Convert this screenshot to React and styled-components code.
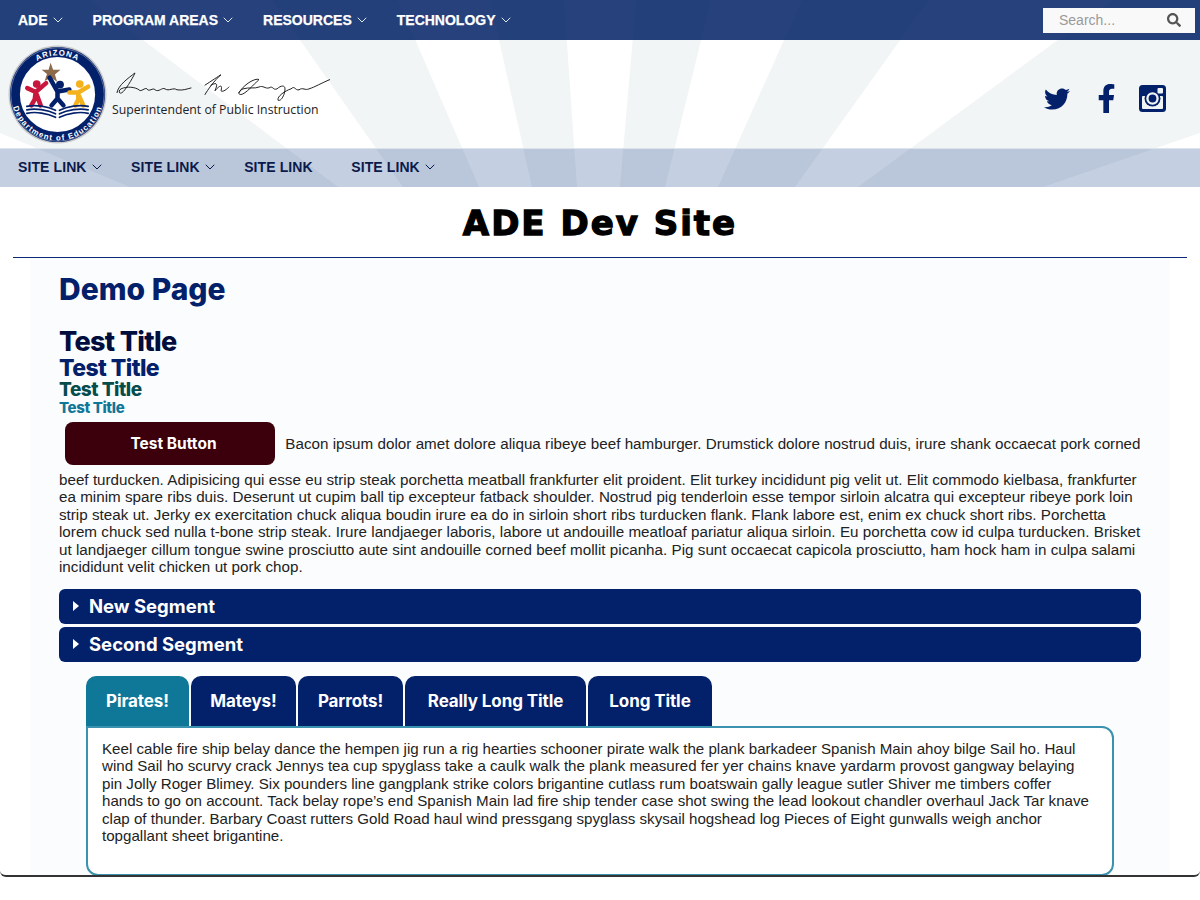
import styled, { createGlobalStyle } from "styled-components";
import { FaTwitter, FaFacebookF, FaSearch } from "react-icons/fa";
import { FiChevronDown } from "react-icons/fi";

const navy = "#03206a";
const teal = "#0f7899";
const heading = "Inter, 'Open Sans', sans-serif";

const GlobalStyle = createGlobalStyle`
  html, body {
    margin: 0;
    padding: 0;
    background: #fff;
    font-family: "Liberation Sans", Arial, sans-serif;
  }
  * { box-sizing: border-box; }
`;

const topLinks = [
  { label: "ADE" },
  { label: "PROGRAM AREAS" },
  { label: "RESOURCES" },
  { label: "TECHNOLOGY" },
];

const siteLinks = [
  { label: "SITE LINK", caret: true },
  { label: "SITE LINK", caret: true },
  { label: "SITE LINK", caret: false },
  { label: "SITE LINK", caret: true },
];

const rays = [
  "0,0 90,0 338,187 130,187 0,133",
  "272,0 398,0 479,187 403,187",
  "490,0 564,0 577,187 532,187",
  "636,0 711,0 665,187 620,187",
  "802,0 929,0 795,187 718,187",
  "1112,0 1200,0 1200,133 1043,187 858,187",
];

const tabs = [
  { label: "Pirates!", width: 103 },
  { label: "Mateys!", width: 105 },
  { label: "Parrots!", width: 105 },
  { label: "Really Long Title", width: 181 },
  { label: "Long Title", width: 124 },
];

const Rays = () => (
  <RaySvg viewBox="0 0 1200 187" preserveAspectRatio="none">
    {rays.map((points) => (
      <polygon key={points} points={points} fill="#f2f5f6" />
    ))}
  </RaySvg>
);

const Logo = () => (
  <LogoSvg viewBox="0 0 100 100">
    <defs>
      <path id="arcTop" d="M 10.5 50 A 39.5 39.5 0 0 1 89.5 50" />
      <path id="arcBottom" d="M 3.5 50 A 46.5 46.5 0 0 0 96.5 50" />
    </defs>
    <circle cx="50" cy="50" r="49.5" fill="#c9c9c9" />
    <circle cx="50" cy="50" r="48" fill={navy} />
    <circle cx="50" cy="50" r="47.2" fill="none" stroke="#dfe3ee" strokeWidth="0.4" />
    <circle cx="50" cy="50" r="38" fill="#fff" />
    <text fill="#fff" fontSize="8" fontWeight="700" letterSpacing="1" fontFamily="Liberation Sans, sans-serif">
      <textPath href="#arcTop" startOffset="50%" textAnchor="middle">
        ARIZONA
      </textPath>
    </text>
    <text fill="#fff" fontSize="8" fontWeight="700" letterSpacing="1.1" fontFamily="Liberation Sans, sans-serif">
      <textPath href="#arcBottom" startOffset="50%" textAnchor="middle">
        Department of Education
      </textPath>
    </text>
    <polygon
      points="43,18 45.6,25 53,25 47.4,29.8 49.6,37 43.4,33 37,36.4 39.4,29.4 34,25 41,25"
      fill="#8c6b4c"
    />
    <g fill="none" strokeLinecap="round" strokeLinejoin="round">
      <circle cx="29" cy="39.5" r="3.9" fill="#c8163c" />
      <path d="M19.5 43.5 L28 47.5 L38.5 38.5 M28 47 L27 55 L23.5 61 M29 50 L33 61" stroke="#c8163c" strokeWidth="4.6" />
      <circle cx="52.5" cy="40" r="4" fill={navy} />
      <path d="M42 33 L50 47 L62 45 M50 46 L50 54 L44 61 M50 54 L56 61" stroke={navy} strokeWidth="4.6" />
      <circle cx="72.5" cy="39.5" r="3.9" fill="#f4b31c" />
      <path d="M62 48 L71 48 L81 42 M71 48 L71 55 L68 61 M72 52 L76 61" stroke="#f4b31c" strokeWidth="4.6" />
      <path d="M19 62 C28 60 40 62 48 66 M52 66 C60 62 72 60 81 62" stroke={navy} strokeWidth="1.7" />
      <path d="M19 65.5 C28 63.5 40 65.5 48 69.5 M52 69.5 C60 65.5 72 63.5 81 65.5" stroke={navy} strokeWidth="1.7" />
      <path d="M19 69 C28 67 40 69 48 73 M52 73 C60 69 72 67 81 69" stroke={navy} strokeWidth="1.7" />
    </g>
  </LogoSvg>
);

const Signature = () => (
  <SignatureSvg viewBox="0 0 215 32" preserveAspectRatio="none">
    <g fill="none" stroke="#1c1c1c" strokeWidth="1" strokeLinecap="round">
      <path d="M2 22 C3 14 14 6 20 1 C17 8 10 20 7 22 C4 24 3 20 6 18 C12 15 20 16 24 19 C26 22 30 16 32 18 C34 22 38 16 40 19 C44 22 47 16 50 18 C54 21 58 16 62 19 C68 20 72 18 76 17" />
      <path d="M90 14 C96 10 104 4 106 3 C100 8 92 20 90 24 M96 14 C100 12 104 10 100 20 C104 15 108 12 106 20 C108 22 112 18 114 16" />
      <path d="M124 22 C128 14 140 6 144 8 C140 12 130 24 126 24 C122 24 124 20 128 18 C134 16 140 18 144 16 C148 14 150 18 154 17 C158 14 158 20 162 18 C166 14 170 14 170 18 C170 24 166 32 163 30 C162 26 170 20 176 18 C180 14 180 20 184 19 C188 16 190 20 194 18 C200 16 206 12 215 8" />
    </g>
  </SignatureSvg>
);

const InstagramIcon = () => (
  <svg width="27" height="27" viewBox="0 0 27 27">
    <rect width="27" height="27" rx="3.5" fill={navy} />
    <rect x="3" y="11" width="21" height="13" rx="1" fill="#f1f4f5" />
    <circle cx="13.5" cy="13.5" r="8" fill={navy} />
    <circle cx="13.5" cy="13.5" r="6.2" fill="#f1f4f5" />
    <circle cx="13.5" cy="13.5" r="3.9" fill={navy} />
    <rect x="18.5" y="3" width="5.5" height="5.5" rx="1" fill="#f1f4f5" />
  </svg>
);

const App = () => {
  return (
    <Shell>
      <GlobalStyle />
      <Header>
        <Rays />
        <TopBar>
          <NavRow>
            {topLinks.map((link) => (
              <TopLink key={link.label}>
                {link.label}
                <FiChevronDown />
              </TopLink>
            ))}
          </NavRow>
          <SearchBox>
            <SearchHint>Search...</SearchHint>
            <FaSearch />
          </SearchBox>
        </TopBar>
        <Masthead>
          <Brand>
            <Logo />
            <BrandText>
              <Signature />
              <Superintendent>Superintendent of Public Instruction</Superintendent>
            </BrandText>
          </Brand>
          <Social>
            <FaTwitter size={26} />
            <FaFacebookF size={29} />
            <InstagramIcon />
          </Social>
        </Masthead>
        <SiteBar>
          {siteLinks.map((link, idx) => (
            <SiteLink key={idx} $plain={!link.caret}>
              {link.label}
              {link.caret && <FiChevronDown />}
            </SiteLink>
          ))}
        </SiteBar>
      </Header>

      <SiteTitle>ADE Dev Site</SiteTitle>

      <Main>
        <PageTitle>Demo Page</PageTitle>
        <TitleStack>
          <TestTitle $size={27} $color="#000d3d">Test Title</TestTitle>
          <TestTitle $size={23} $color={navy}>Test Title</TestTitle>
          <TestTitle $size={19} $color="#064c4c">Test Title</TestTitle>
          <TestTitle $size={15} $color={teal}>Test Title</TestTitle>
        </TitleStack>
        <Copy>
          <TestButton>Test Button</TestButton> Bacon ipsum dolor amet dolore aliqua ribeye beef hamburger. Drumstick
          dolore nostrud duis, irure shank occaecat pork corned beef turducken. Adipisicing qui esse eu strip steak
          porchetta meatball frankfurter elit proident. Elit turkey incididunt pig velit ut. Elit commodo kielbasa,
          frankfurter ea minim spare ribs duis. Deserunt ut cupim ball tip excepteur fatback shoulder. Nostrud pig
          tenderloin esse tempor sirloin alcatra qui excepteur ribeye pork loin strip steak ut. Jerky ex exercitation
          chuck aliqua boudin irure ea do in sirloin short ribs turducken flank. Flank labore est, enim ex chuck short
          ribs. Porchetta lorem chuck sed nulla t-bone strip steak. Irure landjaeger laboris, labore ut andouille
          meatloaf pariatur aliqua sirloin. Eu porchetta cow id culpa turducken. Brisket ut landjaeger cillum tongue
          swine prosciutto aute sint andouille corned beef mollit picanha. Pig sunt occaecat capicola prosciutto, ham
          hock ham in culpa salami incididunt velit chicken ut pork chop.
        </Copy>
        <Segments>
          <Segment>
            <Arrow />
            New Segment
          </Segment>
          <Segment>
            <Arrow />
            Second Segment
          </Segment>
        </Segments>
        <TabArea>
          <TabRow>
            {tabs.map((tab, idx) => (
              <Tab key={tab.label} $active={idx === 0} $width={tab.width}>
                {tab.label}
              </Tab>
            ))}
          </TabRow>
          <TabPanel>
            Keel cable fire ship belay dance the hempen jig run a rig hearties schooner pirate walk the plank barkadeer
            Spanish Main ahoy bilge Sail ho. Haul wind Sail ho scurvy crack Jennys tea cup spyglass take a caulk walk
            the plank measured fer yer chains knave yardarm provost gangway belaying pin Jolly Roger Blimey. Six
            pounders line gangplank strike colors brigantine cutlass rum boatswain gally league sutler Shiver me timbers
            coffer hands to go on account. Tack belay rope’s end Spanish Main lad fire ship tender case shot swing the
            lead lookout chandler overhaul Jack Tar knave clap of thunder. Barbary Coast rutters Gold Road haul wind
            pressgang spyglass skysail hogshead log Pieces of Eight gunwalls weigh anchor topgallant sheet brigantine.
          </TabPanel>
        </TabArea>
      </Main>
    </Shell>
  );
};

export default App;

const Shell = styled.div`
  height: 877px;
  overflow: hidden;
  background: #fff;
  border-bottom: 2px solid #333;
  border-radius: 0 0 6px 6px;
`;

const Header = styled.header`
  position: relative;
  height: 187px;
  background: #fff;
`;

const RaySvg = styled.svg`
  position: absolute;
  inset: 0;
  width: 100%;
  height: 100%;
`;

const TopBar = styled.div`
  position: relative;
  display: flex;
  align-items: center;
  justify-content: space-between;
  height: 40px;
  padding: 0 5px 0 18px;
  background: rgba(0, 32, 100, 0.85);
`;

const NavRow = styled.nav`
  display: flex;
  gap: 30px;
`;

const TopLink = styled.a`
  display: flex;
  align-items: center;
  gap: 5px;
  color: #fff;
  font-size: 14px;
  font-weight: 700;
  -webkit-text-stroke: 0.25px #fff;

  svg {
    width: 16px;
    height: 16px;
    margin: 0 -3px;
    stroke-width: 1.3;
    -webkit-text-stroke: 0;
  }
`;

const SearchBox = styled.div`
  display: flex;
  align-items: center;
  justify-content: space-between;
  width: 152px;
  height: 25px;
  padding: 0 14px 0 16px;
  background: #f9f9f9;
  color: #555;

  svg {
    width: 14px;
    height: 14px;
  }
`;

const SearchHint = styled.span`
  color: #999;
  font-size: 14px;
`;

const Masthead = styled.div`
  position: relative;
  display: flex;
  align-items: center;
  justify-content: space-between;
  height: 109px;
  padding: 0 34px 0 8px;
  border-bottom: 1px solid #dde3ea;
`;

const Brand = styled.div`
  display: flex;
  align-items: center;
  gap: 5px;
`;

const LogoSvg = styled.svg`
  width: 99px;
  height: 99px;
`;

const BrandText = styled.div`
  display: flex;
  flex-direction: column;
  margin-top: 1px;
`;

const SignatureSvg = styled.svg`
  width: 215px;
  height: 30px;
  margin-left: 3px;
`;

const Superintendent = styled.div`
  color: #222;
  font-family: "Open Sans", sans-serif;
  font-size: 12.25px;
  font-weight: 500;
  line-height: 15px;
  white-space: nowrap;
`;

const Social = styled.div`
  display: flex;
  align-items: center;
  gap: 18px;
  margin-top: 9px;
  color: ${navy};

  svg:first-child {
    margin-right: 4px;
  }
`;

const SiteBar = styled.nav`
  position: relative;
  display: flex;
  align-items: center;
  gap: 29.5px;
  height: 38px;
  padding: 0 0 2px 18px;
  background: rgba(0, 48, 126, 0.23);
`;

const SiteLink = styled.a`
  display: flex;
  align-items: center;
  gap: 5px;
  margin-right: ${(p) => (p.$plain ? "9px" : "0")};
  color: #0b1a4a;
  font-size: 14px;
  font-weight: 700;
  letter-spacing: 0.1px;

  svg {
    width: 16px;
    height: 16px;
    margin: 0 -3px;
    stroke-width: 1.5;
  }
`;

const SiteTitle = styled.h1`
  margin: 0 13px;
  height: 71px;
  padding-top: 14px;
  border-bottom: 1px solid #0a2a78;
  color: #000;
  font-family: "DejaVu Sans", sans-serif;
  font-size: 34px;
  font-weight: 700;
  letter-spacing: 2px;
  line-height: 44px;
  text-align: center;
  -webkit-text-stroke: 1.3px #000;
`;

const Main = styled.main`
  margin: 0 30px;
  min-height: 640px;
  padding: 13px 29px 0;
  background: #fbfcfe;
`;

const PageTitle = styled.h2`
  margin: 0 0 21px;
  color: ${navy};
  font-family: ${heading};
  font-size: 30px;
  font-weight: 800;
  line-height: 36px;
`;

const TitleStack = styled.div`
  display: flex;
  flex-direction: column;
`;

const TestTitle = styled.div`
  color: ${(p) => p.$color};
  font-family: ${heading};
  font-size: ${(p) => p.$size}px;
  font-weight: 800;
  letter-spacing: -0.025em;
  line-height: ${(p) => p.$size + 1}px;
`;

const Copy = styled.p`
  margin: 0;
  color: #222;
  font-size: 15.2px;
  word-spacing: 0.1px;
  line-height: 17.45px;
`;

const TestButton = styled.span`
  display: inline-flex;
  align-items: center;
  justify-content: center;
  width: 210px;
  height: 43px;
  margin: 6px;
  padding-left: 7px;
  border-radius: 8px;
  background: #3b000c;
  color: #fff;
  font-family: ${heading};
  font-size: 15.5px;
  font-weight: 700;
  word-spacing: 0;
`;

const Segments = styled.div`
  display: flex;
  flex-direction: column;
  gap: 3px;
  margin-top: 13px;
`;

const Segment = styled.div`
  display: flex;
  align-items: center;
  gap: 10px;
  height: 35px;
  padding-left: 14px;
  border-radius: 6px;
  background: ${navy};
  color: #fff;
  font-family: ${heading};
  font-size: 18.5px;
  font-weight: 700;
`;

const Arrow = styled.span`
  width: 0;
  height: 0;
  border-top: 5.5px solid transparent;
  border-bottom: 5.5px solid transparent;
  border-left: 6px solid #fff;
`;

const TabArea = styled.div`
  margin: 14px 27px 0;
`;

const TabRow = styled.div`
  display: flex;
  gap: 2px;
  height: 50px;
`;

const Tab = styled.div`
  display: flex;
  align-items: center;
  justify-content: center;
  width: ${(p) => p.$width}px;
  border-radius: 10px 10px 0 0;
  background: ${(p) => (p.$active ? teal : navy)};
  color: #fff;
  font-family: ${heading};
  font-size: 17px;
  font-weight: 700;
  letter-spacing: -0.1px;
`;

const TabPanel = styled.div`
  height: 150px;
  padding: 12px 17px 12px 14px;
  border: 2px solid #3a92ae;
  border-radius: 0 12px 12px 12px;
  background: #fff;
  color: #222;
  font-size: 15.12px;
  line-height: 17.45px;
`;
